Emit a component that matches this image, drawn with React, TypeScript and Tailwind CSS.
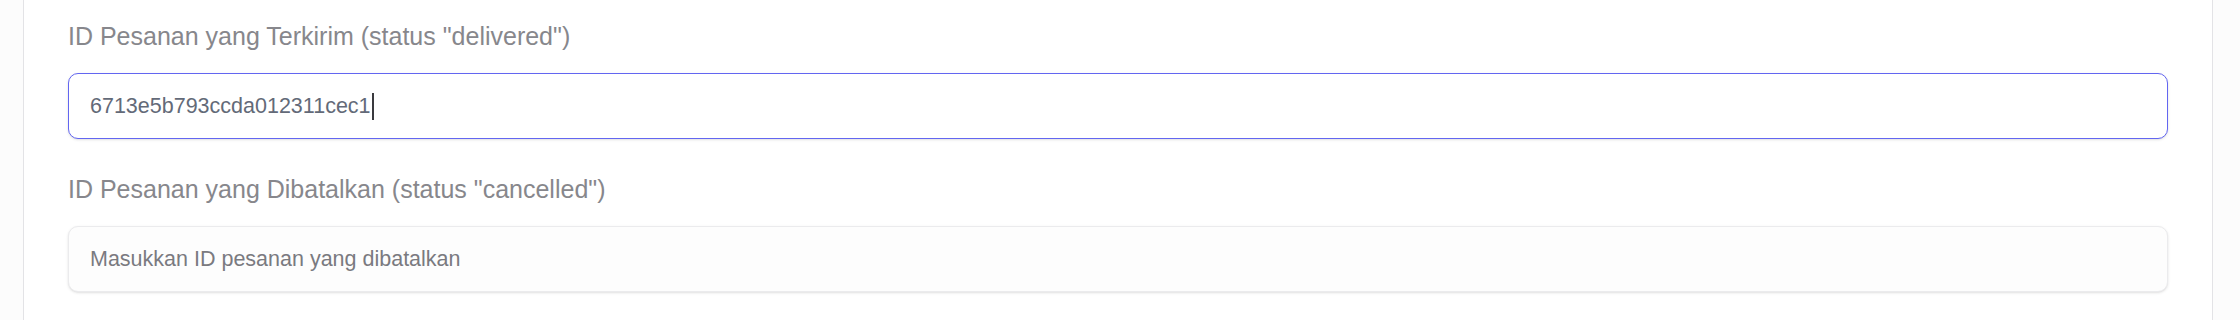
import React from 'react'

const fontStack = { fontFamily: '"Liberation Sans", Arial, Helvetica, sans-serif' }

function Field({ label, children }: { label: string; children: React.ReactNode }) {
  return (
    <div className="flex flex-col">
      <label className="text-[25px] leading-[30px] text-[#87878c] mb-[22px]">{label}</label>
      {children}
    </div>
  )
}

export default function App() {
  return (
    <div className="min-h-[320px] bg-[#fcfcfc] pl-[23px] pr-[27px]" style={fontStack}>
      <div className="min-h-[320px] bg-white border-x border-[#e3e3e6] px-[44px] pt-[21px] flex flex-col gap-[35px]">
        {/* Delivered orders */}
        <Field label={'ID Pesanan yang Terkirim (status "delivered")'}>
          <div
            role="textbox"
            className="h-[66px] rounded-[10px] border border-[#6366f1] bg-white shadow-sm px-[21px] flex items-center text-[21.5px] text-[#636a78]"
          >
            <span>6713e5b793ccda012311cec1</span>
            <span className="ml-[1px] w-[2px] h-[27px] bg-[#3a3a3f]" />
          </div>
        </Field>

        {/* Cancelled orders */}
        <Field label={'ID Pesanan yang Dibatalkan (status "cancelled")'}>
          <input
            type="text"
            placeholder="Masukkan ID pesanan yang dibatalkan"
            className="h-[66px] rounded-[10px] border border-[#ebebed] bg-[#fdfdfd] shadow-sm px-[21px] text-[21.5px] text-[#636a78] placeholder:text-[#7a7a80] outline-none"
            style={fontStack}
          />
        </Field>
      </div>
    </div>
  )
}
